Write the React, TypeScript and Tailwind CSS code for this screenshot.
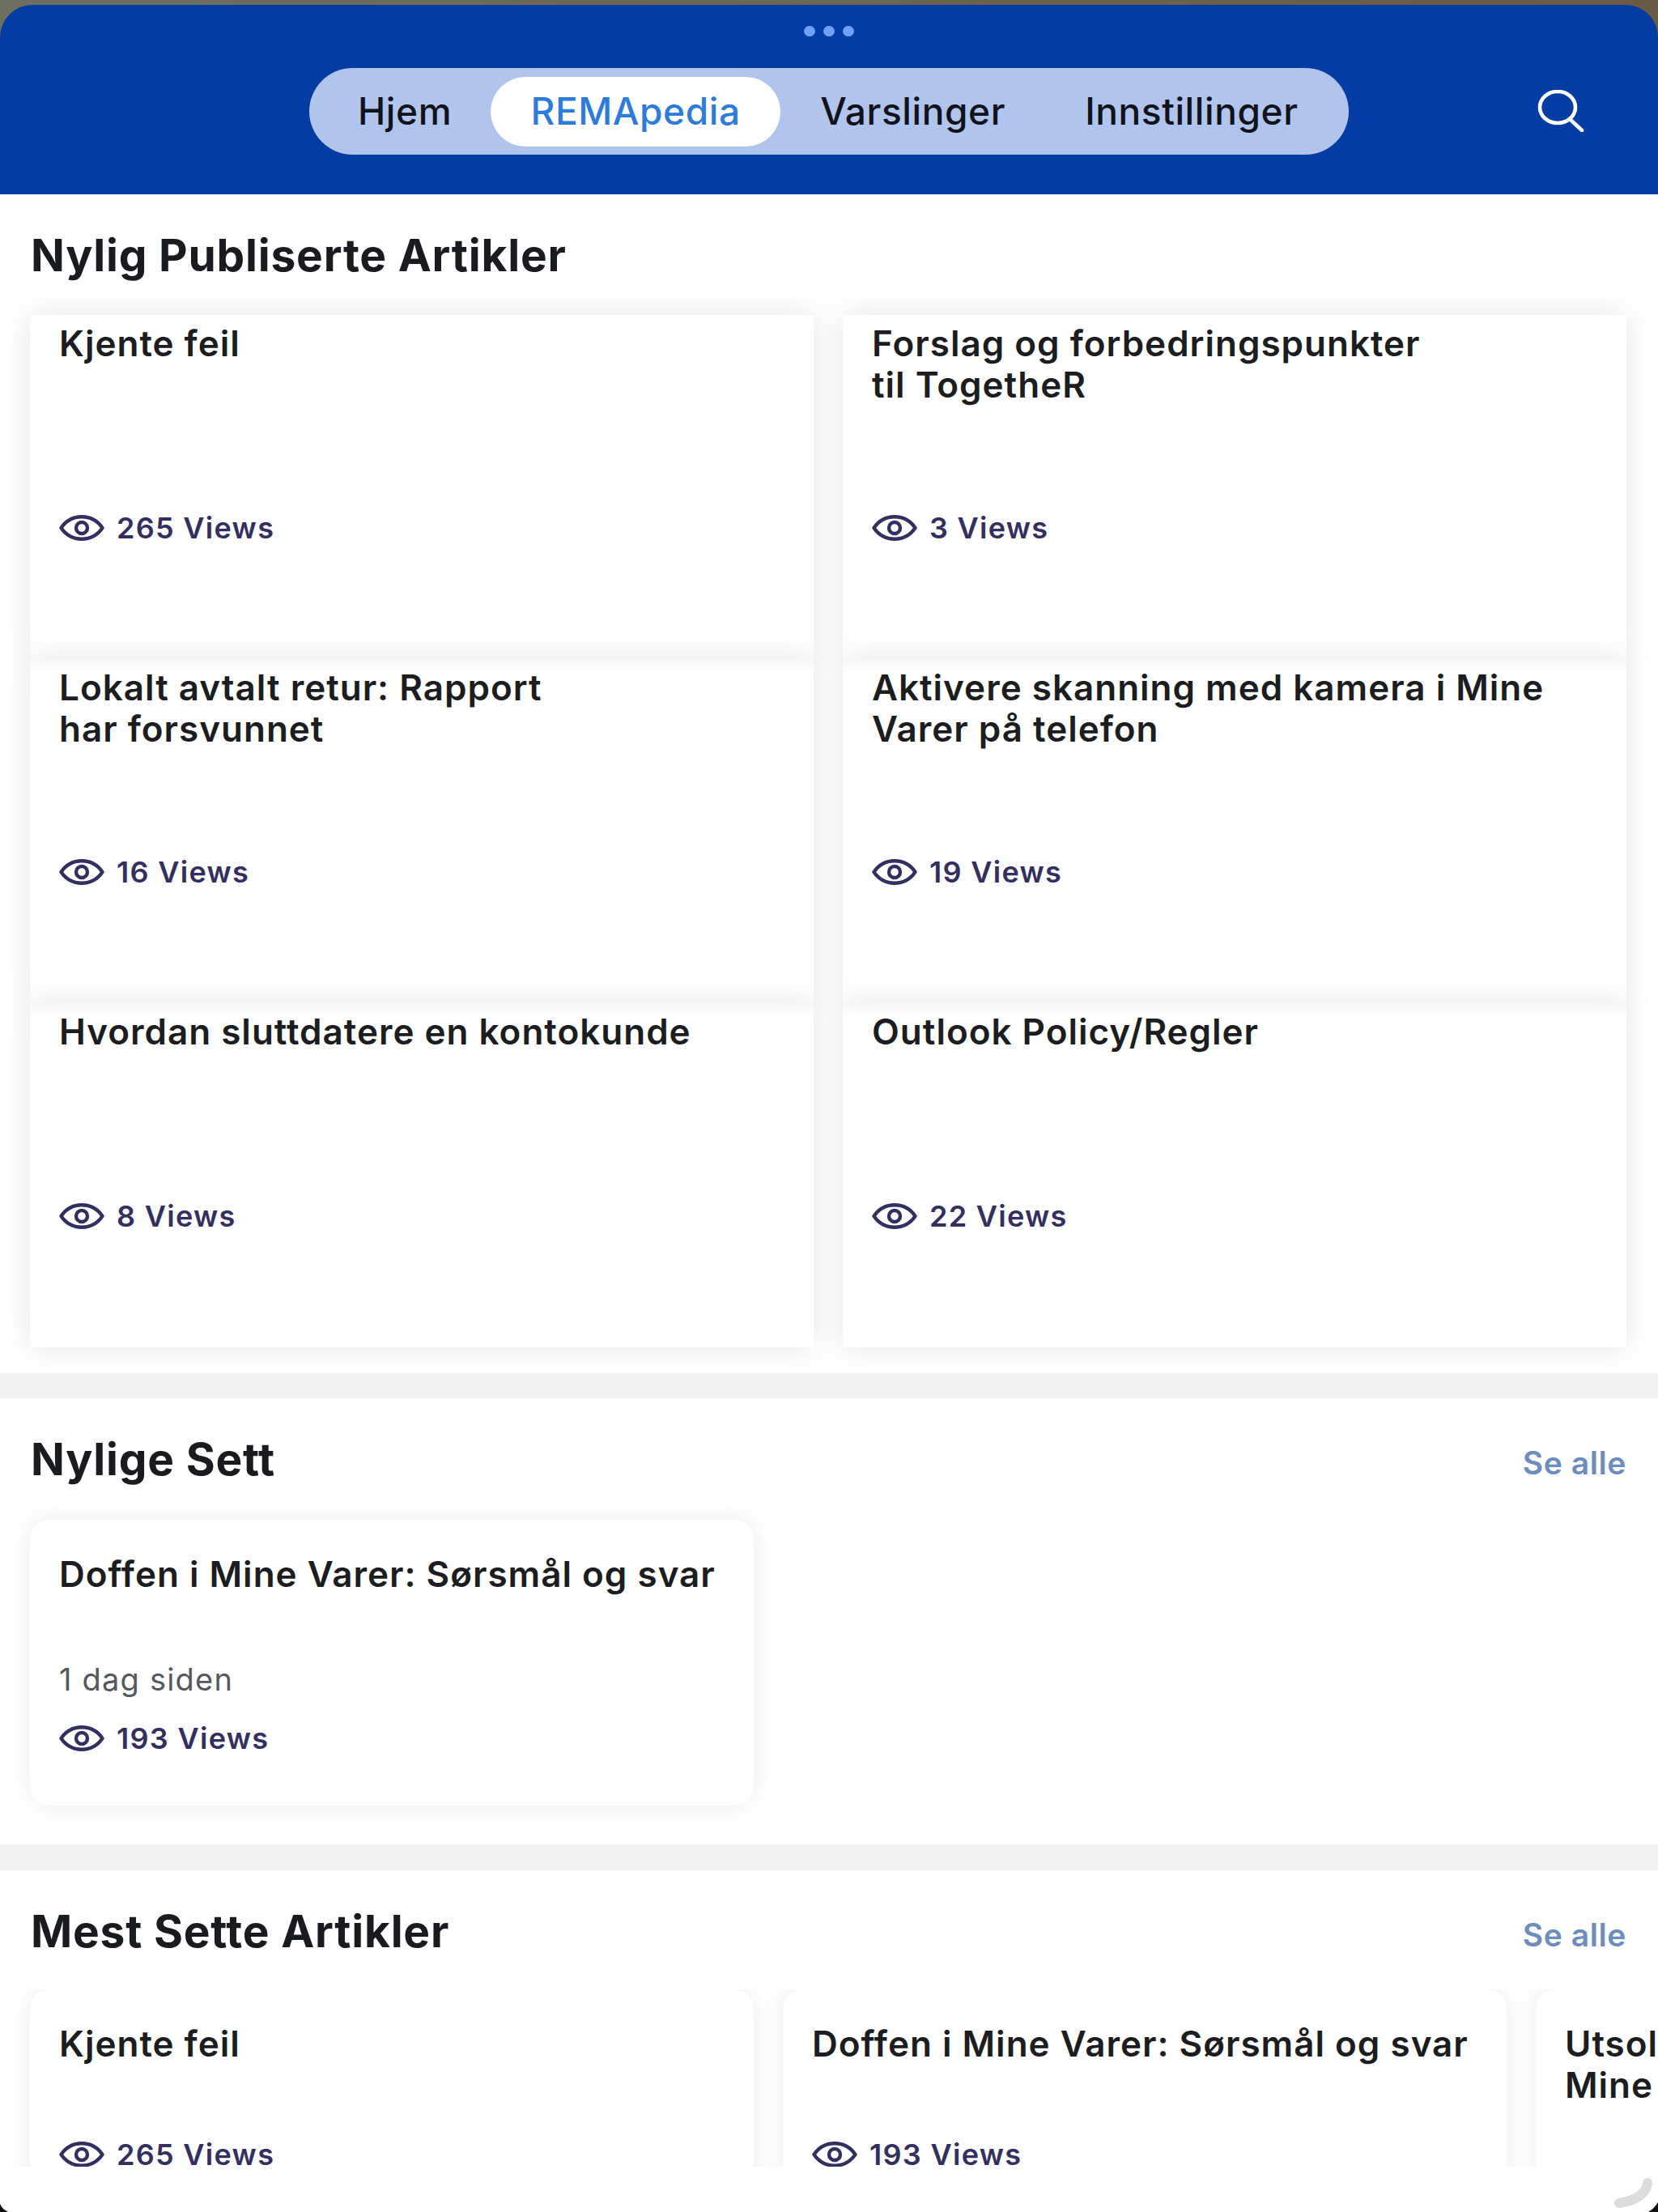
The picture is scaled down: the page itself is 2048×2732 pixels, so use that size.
import React from 'react';

interface ArticleCardProps {
  title: React.ReactNode;
  views: string;
  age?: string;
}

const EyeIcon: React.FC = () => (
  <svg viewBox="0 0 56 32" className="h-[32px] w-[56px] shrink-0" fill="none" stroke="#33305f" strokeWidth="4.4">
    <path d="M2.500 16C9 6.500 18 2.300 28 2.300S47 6.500 53.500 16C47 25.500 38 29.700 28 29.700S9 25.500 2.500 16Z" strokeLinejoin="round" />
    <circle cx="28" cy="16" r="7" />
  </svg>
);

const SearchIcon: React.FC = () => (
  <svg viewBox="0 0 58 52" className="absolute top-[105px] right-[91px] h-[52px] w-[58px]" fill="none" stroke="white" strokeWidth="4.6" strokeLinecap="round">
    <ellipse cx="25" cy="21.500" rx="22" ry="19.500" />
    <path d="M40 36L55 50" />
  </svg>
);

const ViewCount: React.FC<{ views: string }> = ({ views }) => (
  <div className="flex items-center gap-[15px] text-[36px] leading-[40px] font-semibold tracking-[1.3px] text-[#33305f]">
    <EyeIcon />
    <span>{views}</span>
  </div>
);

const titleClass = 'text-[44px] leading-[51px] font-semibold tracking-[1px] text-[#1c1d21]';

// Flat cards in the two column grid at the top of the page
const GridCard: React.FC<ArticleCardProps & { shaded?: boolean }> = ({ title, views, shaded }) => (
  <div
    className={`flex h-[425px] flex-col bg-white px-[36px] ${
      shaded
        ? 'shadow-[0_0_36px_rgba(0,0,0,0.10),inset_0_20px_22px_-20px_rgba(0,0,0,0.07)]'
        : 'shadow-[0_0_36px_rgba(0,0,0,0.10)]'
    }`}
  >
    <h3 className={`h-[243px] shrink-0 pt-[10px] ${titleClass}`}>{title}</h3>
    <ViewCount views={views} />
  </div>
);

const RoundedCard: React.FC<ArticleCardProps> = ({ title, views, age }) => (
  <div className="flex h-[353px] w-[894px] shrink-0 flex-col rounded-[24px] bg-white px-[36px] pt-[42px] shadow-[0_0_30px_rgba(0,0,0,0.08)]">
    <h3 className={titleClass}>{title}</h3>
    {age && <p className="mt-[82px] text-[38px] leading-[44px] tracking-[1.2px] text-[#55585e]">{age}</p>}
    <div className={age ? 'mt-[31px]' : 'mt-[91px]'}>
      <ViewCount views={views} />
    </div>
  </div>
);

const SectionHeader: React.FC<{ title: string; seeAll?: boolean }> = ({ title, seeAll }) => (
  <div className="flex items-center justify-between pr-[39px] pl-[38px]">
    <h2 className="text-[55px] leading-[64px] font-bold tracking-[0.8px] text-[#1a1b1f]">{title}</h2>
    {seeAll && <a className="mt-[9px] text-[39px] leading-[46px] font-semibold tracking-[0.6px] text-[#6d8dbb]">Se alle</a>}
  </div>
);

const Header: React.FC = () => (
  <header className="relative h-[234px] rounded-t-[40px] bg-[#033da3] pt-[26px]">
    <div className="flex justify-center gap-[10px]">
      <span className="h-[13px] w-[14px] rounded-full bg-[#6ea0ff]" />
      <span className="h-[13px] w-[14px] rounded-full bg-[#6ea0ff]" />
      <span className="h-[13px] w-[14px] rounded-full bg-[#6ea0ff]" />
    </div>
    <div className="mt-[39px] flex items-center justify-center">
      <nav className="flex h-[107px] w-[1284px] items-center rounded-[54px] bg-[#b0c4ec] pl-[60px] text-[46px] leading-[54px] font-medium tracking-[0.6px] text-[#10131c]">
        <span className="pb-[2px]">Hjem</span>
        <span className="ml-[48px] flex h-[86px] w-[358px] items-center justify-center rounded-[43px] bg-white pb-[2px] text-[#2f7bd8]">REMApedia</span>
        <span className="ml-[49px] pb-[2px]">Varslinger</span>
        <span className="ml-[98px] pb-[2px]">Innstillinger</span>
      </nav>
    </div>
    <SearchIcon />
  </header>
);

const App: React.FC = () => (
  <div className="relative flex h-[2732px] w-[2048px] flex-col overflow-hidden bg-gradient-to-r from-[#6d705e] to-[#6b5a44] pt-[6px] font-['Inter',sans-serif]">
    <Header />

    <main className="h-[2436px] shrink-0 overflow-hidden bg-white">
      {/* Nylig publiserte */}
      <section className="h-[1456px] pt-[43px]">
        <SectionHeader title="Nylig Publiserte Artikler" />
        <div className="mt-[42px] grid grid-cols-2 gap-x-[36px] pr-[39px] pl-[37px]">
          <GridCard title="Kjente feil" views="265 Views" />
          <GridCard title={<>Forslag og forbedringspunkter<br />til TogetheR</>} views="3 Views" />
          <GridCard shaded title={<>Lokalt avtalt retur: Rapport<br />har forsvunnet</>} views="16 Views" />
          <GridCard shaded title={<>Aktivere skanning med kamera i Mine<br />Varer på telefon</>} views="19 Views" />
          <GridCard shaded title="Hvordan sluttdatere en kontokunde" views="8 Views" />
          <GridCard shaded title="Outlook Policy/Regler" views="22 Views" />
        </div>
      </section>

      <div className="h-[31px] bg-[#f2f2f2]" />

      {/* Nylige sett */}
      <section className="h-[551px] pt-[43px]">
        <SectionHeader title="Nylige Sett" seeAll />
        <div className="mt-[43px] pl-[37px]">
          <RoundedCard title="Doffen i Mine Varer: Sørsmål og svar" age="1 dag siden" views="193 Views" />
        </div>
      </section>

      <div className="h-[32px] bg-[#f2f2f2]" />

      {/* Mest sette */}
      <section className="pt-[43px]">
        <SectionHeader title="Mest Sette Artikler" seeAll />
        <div className="mt-[40px] flex gap-[36px] overflow-hidden pb-[40px] pl-[37px]">
          <RoundedCard title="Kjente feil" views="265 Views" />
          <RoundedCard title="Doffen i Mine Varer: Sørsmål og svar" views="193 Views" />
          <RoundedCard title={<>Utsolgte varer i<br />Mine Varer</>} views="12 Views" />
        </div>
      </section>
    </main>

    <footer className="h-[56px] shrink-0 bg-white" />

    {/* bottom screen corners and scroll hint */}
    <svg viewBox="0 0 60 48" className="absolute right-0 bottom-0 h-[48px] w-[60px]" fill="none">
      <path d="M47 12C46 24 34 34 12 37" stroke="#dcdcdc" strokeWidth="12" strokeLinecap="round" />
      <path d="M48 48C53 45 57 41 60 36V48Z" fill="#111" />
    </svg>
    <svg viewBox="0 0 14 10" className="absolute bottom-0 left-0 h-[10px] w-[14px]">
      <path d="M0 0C2 5 6 8 10 10H0Z" fill="#111" />
    </svg>
  </div>
);

export default App;
